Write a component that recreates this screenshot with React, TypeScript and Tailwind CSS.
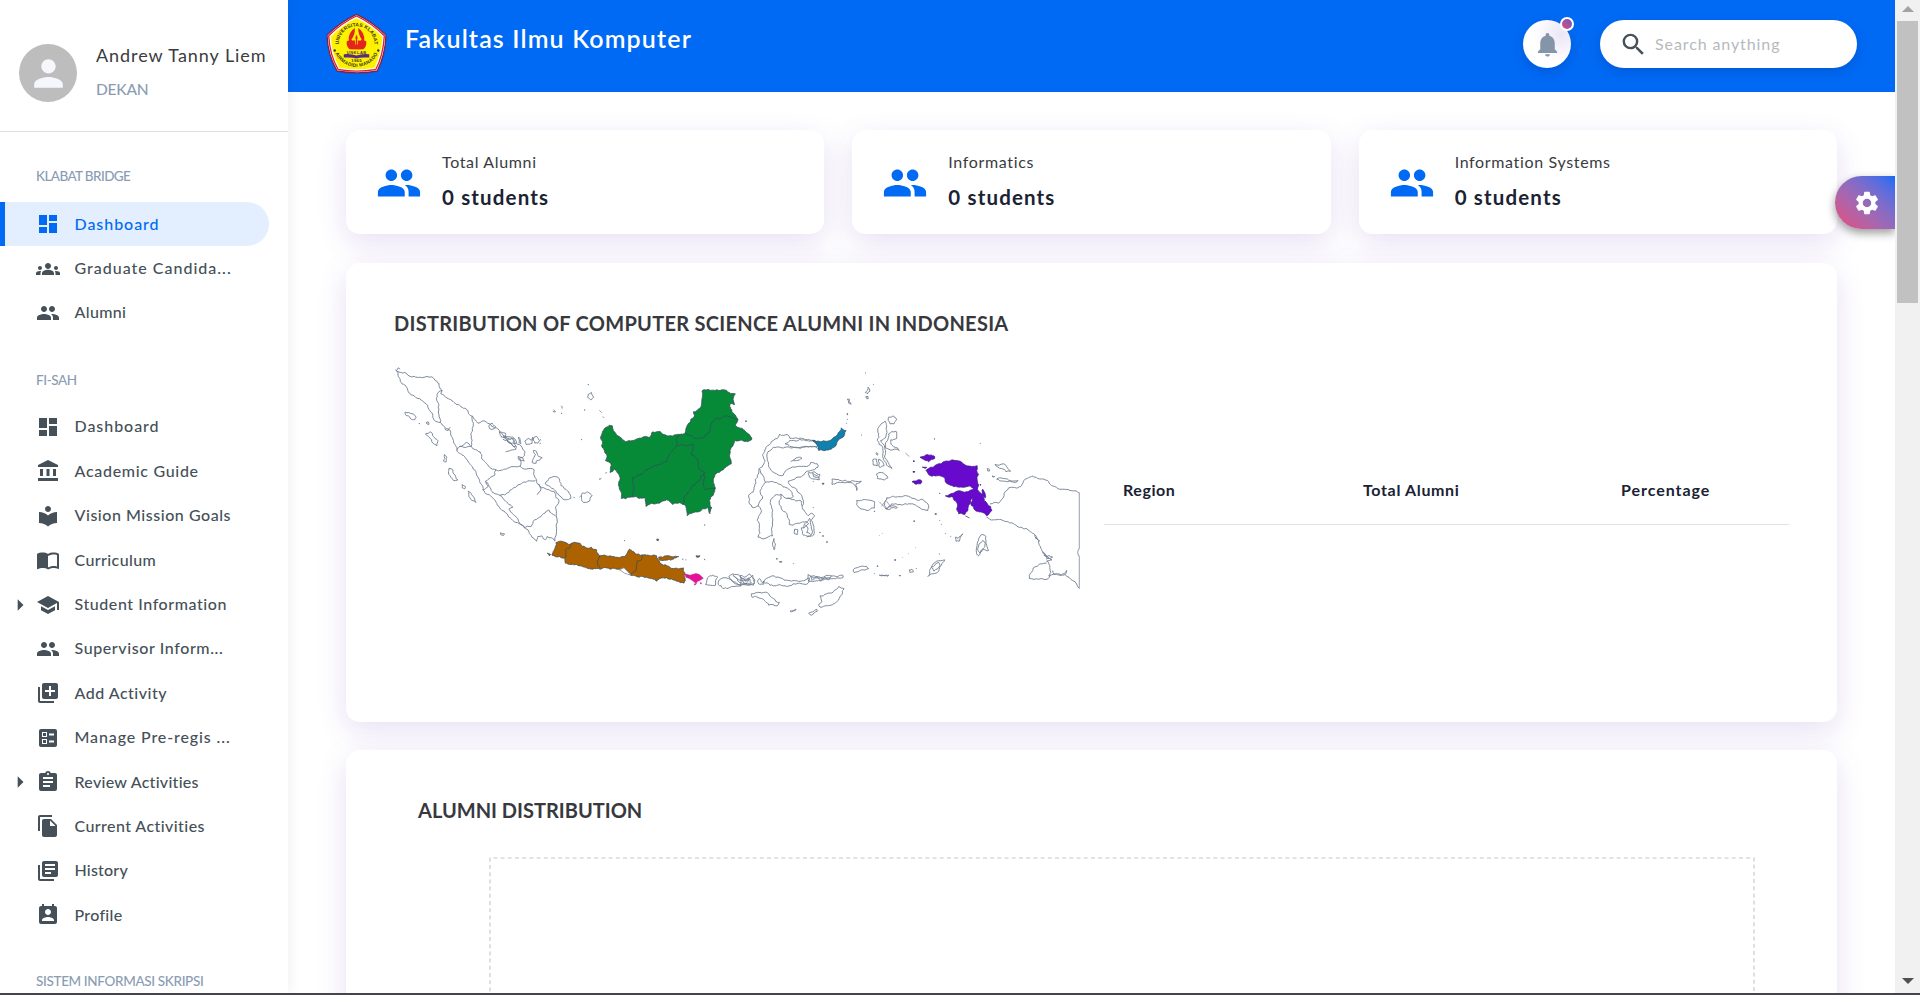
import type { ReactNode } from "react";
import type { IconType } from "react-icons";
import {
  MdAccountBalance,
  MdArrowRight,
  MdAssignment,
  MdBallot,
  MdDashboard,
  MdFileCopy,
  MdGroups,
  MdImportContacts,
  MdLibraryAdd,
  MdLibraryBooks,
  MdLocalLibrary,
  MdNotifications,
  MdPeople,
  MdPermContactCalendar,
  MdPerson,
  MdSchool,
  MdSearch,
  MdSettings,
} from "react-icons/md";

type Item = { label: string; icon: IconType; ls: string; active?: boolean; expandable?: boolean };

const bridge: Item[] = [
  { label: "Dashboard", icon: MdDashboard, ls: "tracking-[0.95px]", active: true },
  { label: "Graduate Candida...", icon: MdGroups, ls: "tracking-[1px]" },
  { label: "Alumni", icon: MdPeople, ls: "tracking-[0.35px]" },
];

const fisah: Item[] = [
  { label: "Dashboard", icon: MdDashboard, ls: "tracking-[0.95px]" },
  { label: "Academic Guide", icon: MdAccountBalance, ls: "tracking-[0.7px]" },
  { label: "Vision Mission Goals", icon: MdLocalLibrary, ls: "tracking-[0.54px]" },
  { label: "Curriculum", icon: MdImportContacts, ls: "tracking-[0.4px]" },
  { label: "Student Information", icon: MdSchool, ls: "tracking-[0.57px]", expandable: true },
  { label: "Supervisor Inform...", icon: MdPeople, ls: "tracking-[0.6px]" },
  { label: "Add Activity", icon: MdLibraryAdd, ls: "tracking-[0.5px]" },
  { label: "Manage Pre-regis ...", icon: MdBallot, ls: "tracking-[0.88px]" },
  { label: "Review Activities", icon: MdAssignment, ls: "tracking-[0.28px]", expandable: true },
  { label: "Current Activities", icon: MdFileCopy, ls: "tracking-[0.42px]" },
  { label: "History", icon: MdLibraryBooks, ls: "tracking-[0.2px]" },
  { label: "Profile", icon: MdPermContactCalendar, ls: "tracking-[0.3px]" },
];

function NavItem({ item }: { item: Item }) {
  const Icon = item.icon;
  return (
    <div
      className={
        "relative flex h-[44.4px] w-[269px] shrink-0 items-center rounded-r-full pl-9 font-medium " +
        (item.active ? "bg-[#e3effe] text-[#006af5] before:absolute before:inset-y-0 before:left-0 before:w-[5px] before:bg-[#006af5]" : "text-[#455058]")
      }
    >
      {item.expandable && <MdArrowRight className="absolute left-[6px] size-7" />}
      <Icon className="size-6 shrink-0" />
      <span className={"ml-[14.5px] whitespace-nowrap pb-px text-[16px] " + item.ls}>{item.label}</span>
    </div>
  );
}

function Logo() {
  return (
    <svg viewBox="22 22 182 182" className="h-[61px] w-[61px] shrink-0">
      <path d="M113 26Q162 49 201 88Q199 148 175 195Q113 206 55 195Q27 148 25 88Q64 49 113 26Z" fill="#fff" stroke="#7a2348" strokeWidth="4" strokeLinejoin="round" />
      <path d="M113 31Q158 52 196 90Q193 147 171 190Q113 201 58 190Q33 147 30 90Q68 52 113 31Z" fill="#fff" stroke="#e02030" strokeWidth="4" strokeLinejoin="round" />
      <path d="M113 38Q154 57 190 93Q187 144 167 185Q113 195 62 185Q39 144 36 93Q72 57 113 38Z" fill="#fff200" />
      <defs>
        <path id="arcTop" d="M63.200 133.100A53 53 0 1 1 162.800 133.100" />
        <path id="arcBottom" d="M43 113A70 70 0 0 0 183 113" />
      </defs>
      <text fontFamily="Liberation Sans" fontWeight="700" fontSize="15" letterSpacing="0.2" fill="#3a3420">
        <textPath href="#arcTop" startOffset="50%" textAnchor="middle">
          UNIVERSITAS KLABAT
        </textPath>
      </text>
      <text fontFamily="Liberation Sans" fontWeight="700" fontSize="14.500" letterSpacing="0.8" fill="#3a3420">
        <textPath href="#arcBottom" startOffset="50%" textAnchor="middle">
          AIRMADIDI MANADO
        </textPath>
      </text>
      <circle cx="48" cy="134" r="3.500" fill="#3a3420" />
      <circle cx="178" cy="134" r="3.500" fill="#3a3420" />
      <path d="M108 67Q88 80 90 104L84 106Q82 120 92 130H134Q144 120 142 106L136 104Q138 80 118 67Q118 86 128 100L124 112H102L98 100Q110 86 108 67Z" fill="#e3251d" />
      <path d="M113 84L118 97L115 114V128H111V114L108 97Z" fill="#e3251d" stroke="#fff200" strokeWidth="2" />
      <path d="M98 104H128V130H98Z" fill="#e3251d" />
      <path d="M110 98V116M116 98V116" stroke="#fff200" strokeWidth="2" />
      <text x="113" y="143" textAnchor="middle" textLength="58" fontFamily="Liberation Sans" fontWeight="700" fontSize="12" fill="#4b3a30">
        UNKLAB
      </text>
      <path d="M75 145Q98 143 113 149Q128 143 151 145V155Q126 153 113 158Q98 153 75 155Z" fill="#5a2e7c" />
      <text x="113" y="169" textAnchor="middle" textLength="31" fontFamily="Liberation Sans" fontWeight="700" fontSize="13" fill="#3a3420">
        1965
      </text>
    </svg>
  );
}

/* Coastlines: corner points are joined by subdivided, slightly displaced segments. */
type Pt = [number, number];

function coast(src: string, closed: boolean): string {
  const nums = src.trim().split(/[\s,]+/).map(Number);
  let pts: Pt[] = [];
  for (let i = 0; i + 1 < nums.length; i += 2) pts.push([nums[i], nums[i + 1]]);
  if (closed) pts.push(pts[0]);
  for (let level = 0; level < 3; level++) {
    const next: Pt[] = [pts[0]];
    for (let i = 1; i < pts.length; i++) {
      const [ax, ay] = pts[i - 1];
      const [bx, by] = pts[i];
      const len = Math.hypot(bx - ax, by - ay);
      if (len > 7) {
        const h = Math.sin(ax * 12.9898 + ay * 78.233 + bx * 3.17 + by * 7.7) * 43758.5453;
        const k = (h - Math.floor(h) - 0.5) * Math.min(0.34, 7 / len);
        next.push([(ax + bx) / 2 - (by - ay) * k, (ay + by) / 2 + (bx - ax) * k]);
      }
      next.push(pts[i]);
    }
    pts = next;
  }
  return "M" + pts.map((p) => p[0].toFixed(1) + " " + p[1].toFixed(1)).join("L") + (closed ? "Z" : "");
}

function Land({ fill = "none", d }: { fill?: string; d: string[] }) {
  return <path d={d.map((s) => coast(s, true)).join("")} fill={fill} />;
}

function Border({ d }: { d: string[] }) {
  return <path d={d.map((s) => coast(s, false)).join("")} fill="none" />;
}

function IndonesiaMap() {
  return (
    <svg viewBox="394 360 688 262" className="h-[262px] w-[688px]" strokeLinejoin="round">
      <g transform="translate(379.5 290.5) scale(.33333)" stroke="#6f7d90" strokeWidth="2.7">
        <Land
          d={[
            "53,243 75,246 95,259 130,261 155,259 172,272 180,290 188,300 184,310 215,328 240,344 265,360 272,375 280,378 295,398 307,392 330,400 345,412 362,424 372,436 395,440 408,448 412,460 425,466 437,484 435,495 420,502 425,515 422,528 440,536 464,538 466,560 472,578 485,592 510,598 525,604 530,622 538,628 528,650 530,676 526,752 515,742 503,738 498,748 487,736 475,738 472,752 455,735 435,712 400,690 368,660 350,636 325,612 310,598 298,565 275,525 255,498 232,480 222,450 210,418 182,396 165,390 160,370 130,332 110,322 85,300 62,272",
            "77,365 88,366 110,380 106,388 92,383 78,373",
            "138,430 152,424 175,450 172,466 160,458 148,440",
            "195,492 202,500 200,514 192,512 196,504",
            "208,534 220,538 235,568 222,570 208,552",
            "248,582 258,588 256,595 248,592",
            "266,602 276,612 284,622 290,636 278,630 268,612",
            "140,396 146,394 148,402 142,400",
            "363,727 375,730 372,735 364,733",
            "497,580 510,562 535,560 545,586 568,604 574,624 560,628 540,616 525,598 508,586",
            "608,608 625,604 638,616 630,632 612,636 606,624",
            "328,406 338,398 348,408 340,416 330,414",
            "359,424 378,428 380,444 366,440",
            "372,436 402,444 408,460 390,458",
            "382,446 396,444 412,470 396,462",
            "436,452 446,444 455,450 460,440 458,458 440,462",
            "462,442 472,438 480,450 475,458 466,458",
            "462,480 472,484 478,498 488,502 472,510 470,518 458,516 464,500 468,492",
            "417,440 422,444 424,460 418,456",
            "416,498 430,502 434,512 418,508",
            "626,312 636,306 642,320 634,328 624,320",
            "984,862 1000,854 1015,860 1008,884 990,884 978,882",
            "1018,870 1040,862 1062,876 1085,886 1060,888 1030,894 1016,882",
            "1048,858 1060,850 1080,856 1096,860 1110,850 1120,862 1124,880 1105,884 1080,884 1062,874",
            "1060,854 1078,868 1096,870 1108,862 1100,880 1080,876",
          ]}
        />
        <Border
          d={[
            "188,300 176,306 172,330 176,350 182,396",
            "278,376 282,398 274,430 276,456 275,468 240,468 232,480",
            "240,468 260,456 275,468 302,484 306,502 330,530 350,538 380,536 422,526",
            "350,538 345,555 318,572 326,588 310,598",
            "318,572 335,600 360,614 388,606 400,594 430,576 468,570",
            "360,614 378,632 400,650 388,656 410,680 435,712 455,708 465,688 485,678 508,658 528,676",
            "378,484 410,476 398,462 370,446",
            "472,612 484,598 478,580",
            "48,238 54,244 50,240 56,232 62,236",
            "522,358 528,364 520,362",
            "546,346 548,354",
            "660,360 666,366",
            "670,378 674,382",
            "582,620 586,622",
            "600,620 604,616",
            "195,414 206,420 212,410",
            "482,446 484,450",
            "480,460 484,458",
          ]}
        />
      </g>
      <g transform="translate(380 290.5) scale(.33333)" stroke="#34495e" strokeWidth="2.2">
        <Land
          fill="#078a37"
          d={[
            "688,404 697,406 700,420 720,440 737,454 775,444 810,440 818,424 842,424 868,436 900,432 916,426 926,398 944,376 940,364 958,354 966,302 1000,299 1040,300 1048,306 1066,310 1060,322 1064,342 1050,340 1052,354 1062,370 1074,386 1066,404 1090,418 1116,446 1104,454 1064,450 1050,480 1054,520 1040,528 1018,546 1004,552 1000,570 1006,592 1000,614 988,630 996,652 990,670 984,650 922,676 918,646 890,638 878,642 860,628 838,638 815,638 798,648 796,622 768,618 750,620 724,624 716,578 720,560 704,536 690,546 694,524 676,510 680,492 666,470 664,448 670,420",
          ]}
        />
        <Border
          d={[
            "757,616 762,590 758,562 790,546 822,526 860,514 872,486 890,466 940,462 936,494 946,500 956,532 974,548 962,556 960,570 930,600 912,620 910,642",
            "890,466 888,448 900,432",
            "916,426 940,440 958,444 990,422 996,396 1010,384 1040,376 1072,386",
            "972,548 974,596 1006,594",
            "657,566 664,564",
            "676,548 680,546",
          ]}
        />
        <Land
          fill="#ad6200"
          d={[
            "528,756 550,754 570,762 580,756 600,758 606,768 634,770 650,778 656,794 690,796 735,798 748,776 762,784 766,790 800,794 830,796 834,806 850,824 880,834 910,832 914,846 912,878 890,872 868,866 850,862 830,872 800,860 770,858 752,854 742,840 722,838 690,836 650,834 620,832 590,822 556,818 556,802 538,798 516,794 522,780",
            "836,800 860,796 896,798 880,806 850,810 838,808",
            "502,788 512,792 508,796",
            "948,796 960,796 958,799 950,800",
            "830,746 836,746 835,750 831,750",
          ]}
        />
        <Border
          d={[
            "574,758 570,772 556,778 556,802",
            "660,796 652,812 660,832",
            "786,792 784,808 770,812 768,840 752,854",
            "906,806 910,806",
            "916,808 919,808",
            "972,806 976,808",
          ]}
        />
        <path d="M718 838L732 832L748 848L752 854L734 848Z" fill="#fff" stroke="#7b8798" />
        <path d="M914 850L930 854L948 849L958 852L970 863L958 871L951 873L949 880L940 872L928 864L918 860Z" fill="#e8109a" stroke="#a0307c" strokeWidth="1.5" />
        <path d="M943 880h4v3h-4zM961 877h3v3h-3z" fill="#e8109a" stroke="#a0307c" strokeWidth="1.5" />
        <path d="M974 703h1v1h-1zM1097 391h2v2h-2zM733 750h1v1h-1zM604 447h1v1h-1zM614 358h1v1h-1zM624 282h1v1h-1zM117 399h1v1h-1zM544 368h1v1h-1z" />
      </g>

      <g transform="translate(740 290.5) scale(.33333)" stroke="#6f7d90" strokeWidth="2.7">
        <Land
          d={[
            "118,432 145,434 150,444 190,444 222,450 236,462 238,474 210,468 170,472 135,470 100,470 84,484 82,510 90,534 110,550 130,554 140,538 165,530 205,526 212,516 232,520 234,530 212,540 180,560 158,568 145,572 152,586 170,596 190,630 186,646 205,676 214,668 224,676 214,690 222,708 218,736 190,734 184,712 206,700 188,694 160,704 148,702 140,668 124,654 118,630 124,612 105,614 92,628 98,660 96,710 98,736 75,744 54,740 58,710 52,690 64,660 54,646 36,650 28,640 26,614 40,604 46,568 58,534 72,520 68,492 82,466 100,450 112,444",
            "135,460 150,450 190,448 222,452 232,468 190,470 150,468",
            "164,716 174,718 172,732 162,728",
            "206,546 224,544 240,552 238,568 222,566 208,560",
            "218,548 232,556 236,562 220,558",
            "276,566 300,570 330,574 364,572 356,578 348,580 350,600 344,584 310,576 276,582",
            "350,630 380,628 404,634 404,652 385,660 360,654 350,642",
            "446,380 460,376 470,386 462,400 450,400",
            "416,410 436,392 440,420 436,442 422,450 434,470 434,500 446,518 456,534 444,528 430,508 428,470 412,450 416,430",
            "446,430 468,422 470,444 452,448 456,464 478,480 458,478 436,472",
            "410,550 424,546 444,562 434,568 412,564",
            "398,508 410,506 412,526 400,524",
            "416,506 430,518 432,526 418,530",
            "434,640 440,622 468,620 500,616 522,624 550,628 566,646 564,660 540,652 510,640 480,642 455,640 440,656",
            "436,654 456,646 472,652 450,656",
            "765,522 790,520 812,542 798,544 785,534",
            "756,556 764,558 760,560",
            "770,566 790,564 834,570 826,576 790,572",
            "742,534 748,536 748,542 743,541",
            "710,770 726,732 738,738 740,764 746,780 728,776 716,796 710,790",
            "714,772 728,750 736,760 730,774 720,788",
            "646,740 654,744 668,730 658,752 648,752",
            "564,858 574,830 590,812 614,808 604,824 596,842 578,850",
            "574,830 596,816 600,826 582,842",
            "340,838 356,830 380,828 386,834 364,838 342,846",
            "0,856 20,866 38,854 44,868 40,884 20,880 0,884",
            "4,862 16,872 30,866 34,878 12,878",
            "74,868 96,856 120,862 146,870 180,872 208,862 204,878 170,880 130,886 90,884 70,876",
            "204,852 220,862 250,860 280,856 310,856 308,862 280,864 250,868 222,872 206,872",
            "210,856 216,870 232,858 240,870 254,858 266,868 274,858 262,862 244,864",
            "34,910 60,906 82,906 100,924 118,936 112,946 86,944 64,924 36,920",
            "240,916 260,910 280,904 296,888 312,894 306,912 290,934 262,946 240,950 236,942 246,932",
            "206,968 230,956 232,962 214,974",
            "376,306 384,290 390,302 382,310",
            "378,318 384,318 383,325 378,322",
            "322,326 328,326 334,340 326,338",
            "150,962 168,956 166,960 154,964",
            "102,744 106,760 102,778 98,756",
            "52,872 58,864 66,876 72,872 70,882 56,880",
            "508,838 516,836 520,844 510,846",
            "418,854 446,854 444,857 424,856",
            "410,486 414,490 412,494 408,490",
          ]}
        />
        <Border
          d={[
            "58,534 72,560 76,576 100,574 130,590 156,606 160,618 140,624 122,612",
            "76,576 60,600 68,624 54,646",
            "186,646 184,632 150,624 140,624",
            "152,514 170,510 186,504 178,500 160,508",
            "190,712 198,696 210,684 216,730 200,740",
            "196,704 204,716 200,726 212,732",
          ]}
        />
        <Border
          d={[
            "750,640 776,638 806,592 842,588 850,574 876,556 912,566 944,588 990,600 1018,608",
            "740,680 760,688 790,690 828,704 858,714 884,732 896,750 906,780 920,796 936,808 920,812 930,826 932,846 925,864 868,864 880,832 900,820 920,818",
            "884,732 892,744 886,742 900,752",
            "908,784 922,804 912,794 938,800 918,806",
            "925,856 945,850 975,852 1018,894",
            "938,840 942,852 972,850 980,840 976,852",
          ]}
        />
        <path d="M1018 606V774Q1008 786 1018 798V894" fill="none" stroke="#a3acb7" strokeWidth="3.500" />
        <path
          d="M376 247h1v1h-1zM400 281h1v1h-1zM321 369h2v4h-2zM321 386h1v1h-1zM319 398h1v1h-1zM364 433h1v1h-1zM720 458h1v1h-1zM219 651h1v1h-1zM219 573h1v1h-1zM239 725h2v2h-2zM248 735h2v3h-2zM260 753h2v3h-2zM109 804h3v2h-3zM119 813h6v2h-6zM160 818h1v1h-1zM247 578h5v3h-5zM521 691h3v2h-3zM585 669h4v3h-4zM599 689h1v1h-1zM604 701h1v1h-1zM616 729h1v1h-1zM632 737h1v1h-1zM427 729h.5v.5h-.5zM418 735h.5v.5h-.5zM464 807h3v3h-3zM488 801h.5v.5h-.5zM505 790h.5v.5h-.5zM527 772h.5v.5h-.5zM411 826h3v2h-3zM403 849h1v1h-1zM477 855h5v1h-5zM598 790h1v1h-1zM528 834h1v1h-1zM496 488l12 10M380 322l6 3M418 634l20 20M424 648l18-24M440 632l14 20M402 662h3v1h-3z"
          strokeWidth="2"
        />
      </g>
      <g transform="translate(740 290.5) scale(.33333)" stroke="#34495e" strokeWidth="2.2">
        <Land fill="#0e81ad" d={["218,449 240,454 262,452 282,440 304,412 318,420 314,432 302,444 290,460 274,476 256,480 236,480 232,464"]} />
        <g stroke="#3a1a80">
          <Land
            fill="#670acd"
            d={[
              "580,530 604,520 616,512 636,508 660,512 680,526 712,526 710,540 716,552 712,572 716,584 712,596 728,616 742,640 756,660 740,676 722,664 706,660 692,640 698,620 690,640 684,660 674,672 656,670 650,656 650,636 640,620 616,616 640,608 664,602 684,604 702,594 690,586 668,590 640,588 622,580 614,562 590,556 572,556 558,540 566,534",
              "540,500 556,494 584,498 584,504 566,514 550,506",
              "516,574 534,568 546,572 542,580 524,580",
              "728,596 734,606 736,622 728,614",
              "547,530 560,530 556,534",
            ]}
          />
          <path d="M519 543h5v2h-5zM520 511h3v2h-3zM583 445h1v1h-1zM599 608h1v1h-1zM720 582h2v2h-2zM676 676l12 6" />
        </g>
      </g>
    </svg>
  );
}

function Card({ className, children }: { className: string; children: ReactNode }) {
  return <section className={"rounded-[14px] bg-white shadow-[0_9px_30px_rgba(92,50,180,0.15)] " + className}>{children}</section>;
}

function Stat({ label }: { label: string }) {
  return (
    <Card className="flex h-[104px] items-center pl-[30px]">
      <MdPeople className="mt-[2px] size-[46px] text-[#006af5]" />
      <div className="ml-5 flex flex-col pb-[3px]">
        <span className="text-[16px] leading-6 tracking-[0.65px] text-[#3a3b40]">{label}</span>
        <span className="mt-[9px] text-[20.5px] font-bold leading-7 tracking-[1.15px] text-[#1a2233]">0 students</span>
      </div>
    </Card>
  );
}

export default function App() {
  return (
    <div className="flex h-[995px] w-[1920px] flex-col overflow-hidden bg-white font-['Lato',sans-serif]">
      <div className="flex h-[993px] overflow-hidden">
        <aside className="z-10 flex w-72 shrink-0 flex-col bg-white shadow-[0_0_14px_rgba(0,0,0,0.08)]">
          <div className="flex h-[132px] shrink-0 border-b border-[#e0e0e0] pl-[19px] pt-11">
            <div className="flex size-[58px] items-center justify-center rounded-full bg-[#bdbdbd]">
              <MdPerson className="size-[43px] text-[#f5f7fc]" />
            </div>
            <div className="ml-[19px] flex flex-col whitespace-nowrap">
              <span className="-mt-px text-[18px] leading-6 tracking-[0.95px] text-[#3a3b40]">Andrew Tanny Liem</span>
              <span className="mt-[10px] text-[15.500px] font-medium leading-6 tracking-[-0.2px] text-[#8b9cb3]">DEKAN</span>
            </div>
          </div>
          <div className="flex h-[70px] shrink-0 items-end pb-4 pl-9 text-[13.500px] font-medium leading-5 tracking-[-0.6px] text-[#8b9cb3]">KLABAT BRIDGE</div>
          {bridge.map((i) => (
            <NavItem key={i.label} item={i} />
          ))}
          <div className="flex h-[69.600px] shrink-0 items-end pb-[15px] pl-9 text-[13.500px] font-medium leading-5 tracking-[-0.4px] text-[#8b9cb3]">FI-SAH</div>
          {fisah.map((i) => (
            <NavItem key={i.label} item={i} />
          ))}
          <div className="mt-[34px] pl-9 text-[13.500px] font-medium leading-5 tracking-[-0.35px] text-[#8b9cb3]">SISTEM INFORMASI SKRIPSI</div>
        </aside>

        <div className="relative flex w-[1607px] shrink-0 flex-col">
          <header className="flex h-[92px] shrink-0 items-start bg-[#006af5] pl-[38px] pr-[38px]">
            <div className="pt-[13px]">
              <Logo />
            </div>
            <h1 className="ml-[18px] mt-[22px] text-[25px] font-semibold leading-8 tracking-[1.15px] text-white">Fakultas Ilmu Komputer</h1>
            <div className="relative ml-auto mt-5 flex size-12 items-center justify-center rounded-full bg-[radial-gradient(circle_at_80%_30%,#ece6f6,#fff_55%)] shadow-[0_4px_12px_rgba(0,30,100,0.2)]">
              <MdNotifications className="size-[29px] text-[#8595a8]" />
              <span className="absolute -right-[3px] -top-[3px] size-[14px] rounded-full border-2 border-white bg-linear-to-bl from-[#7050b8] to-[#d84a7c]" />
            </div>
            <div className="ml-[29px] mt-5 flex h-12 w-[257px] items-center rounded-full bg-white pl-[19px] shadow-[0_4px_12px_rgba(0,30,100,0.2)]">
              <MdSearch className="size-[29px] text-[#455058]" />
              <span className="ml-[7px] text-[16px] tracking-[0.9px] text-[#b5babd]">Search anything</span>
            </div>
          </header>

          <main className="flex flex-col gap-7 pl-[58px] pr-[58px] pt-[38px]">
            <div className="grid grid-cols-3 gap-7">
              <Stat label="Total Alumni" />
              <Stat label="Informatics" />
              <Stat label="Information Systems" />
            </div>
            <Card className="mt-[1px] h-[459px] px-12 pt-[46px]">
              <h2 className="text-[20px] font-bold leading-7 tracking-[0.28px] text-[#38393e]">DISTRIBUTION OF COMPUTER SCIENCE ALUMNI IN INDONESIA</h2>
              <div className="mt-[23px] flex">
                <IndonesiaMap />
                <div className="ml-[22px] mt-[104px] grid h-[61px] w-[685px] grid-cols-[240px_258px_1fr] border-b border-[#e3e3e5] pl-[19px] pt-[14px] text-[16px] font-bold leading-6 text-[#1a2233]">
                  <span className="tracking-[0.55px]">Region</span>
                  <span className="tracking-[0.65px]">Total Alumni</span>
                  <span className="tracking-[0.95px]">Percentage</span>
                </div>
              </div>
            </Card>
            <Card className="h-[459px] pt-[46px]">
              <h2 className="pl-[72px] text-[20px] font-bold leading-7 text-[#38393e]">ALUMNI DISTRIBUTION</h2>
              <svg viewBox="0 0 1266 300" className="ml-[143px] mt-[33px] h-[300px] w-[1266px]">
                <path d="M1 300V1H1265V300" fill="none" stroke="#dadada" strokeWidth="1.7" strokeDasharray="4 3.2" />
              </svg>
            </Card>
          </main>

          <div className="absolute right-0 top-[176px] flex h-[53px] w-[60px] items-center justify-center rounded-l-full bg-linear-to-tr from-[#e8467a] to-[#006af5] pl-1 shadow-[0_4px_10px_rgba(0,0,0,0.4)]">
            <MdSettings className="size-7 text-white" />
          </div>
        </div>

        <div className="z-10 flex w-[25px] shrink-0 flex-col items-center bg-[#f1f1f1]">
          <svg viewBox="0 0 12 6" className="mt-[6px] h-[6px] w-3">
            <path d="M0 6L6 0L12 6Z" fill="#a3a3a3" />
          </svg>
          <div className="mt-[9px] h-[282px] w-[21px] bg-[#c1c1c1]" />
          <svg viewBox="0 0 12 6" className="mb-[9px] mt-auto h-[6px] w-3">
            <path d="M0 0L6 6L12 0Z" fill="#505050" />
          </svg>
        </div>
      </div>
      <div className="h-[2px] bg-[#45454d]" />
    </div>
  );
}
